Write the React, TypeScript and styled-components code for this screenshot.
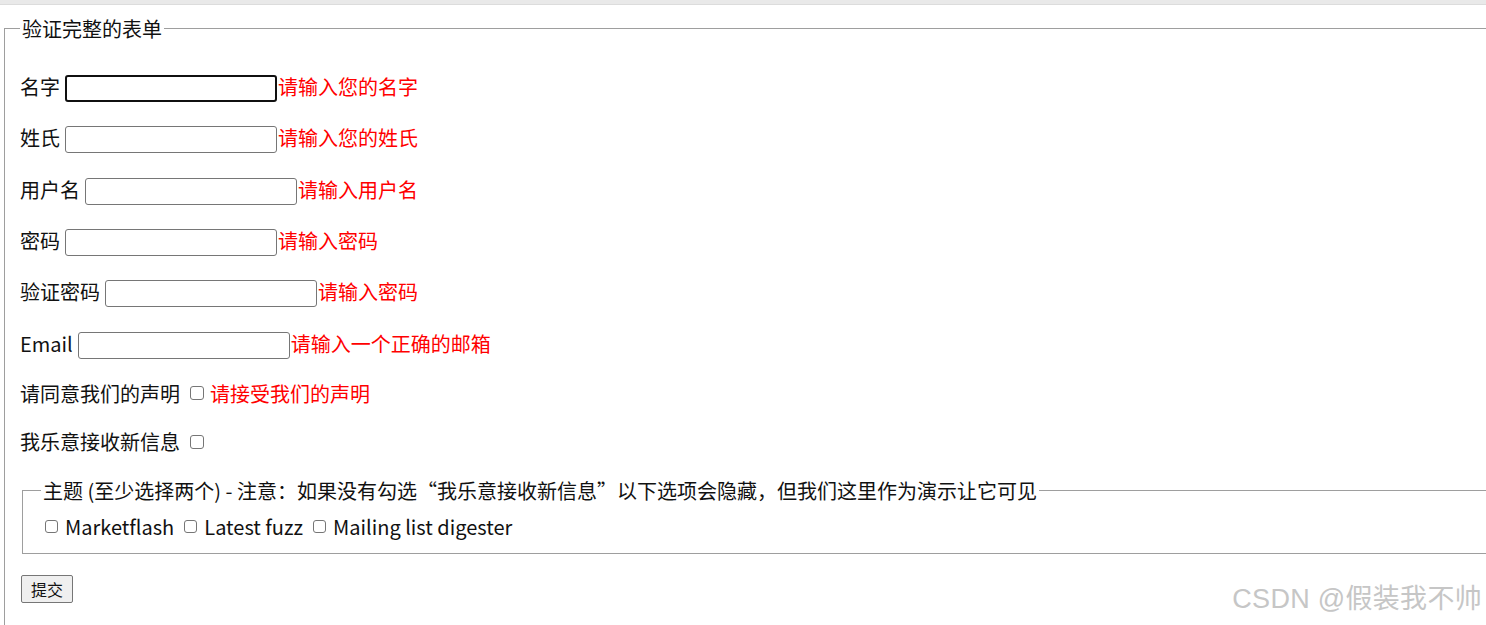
import React from "react";
import styled, { createGlobalStyle } from "styled-components";

const GlobalStyle = createGlobalStyle`
  html, body {
    margin: 0;
    padding: 0;
    overflow: hidden;
    background: #ffffff;
    width: 1486px;
    height: 625px;
  }
  body {
    font-family: "Noto Sans CJK SC", "Noto Sans", sans-serif;
    font-size: 20px;
    color: #111;
  }
`;

const Page = styled.div`
  position: relative;
  width: 1486px;
  height: 625px;
  overflow: hidden;
`;

const TopBar = styled.div`
  height: 4px;
  background: #e9e9e9;
  border-bottom: 1px solid #dcdcdc;
`;

const OuterFieldset = styled.fieldset`
  margin: 9px 0 0 4px;
  padding: 0 0 40px 15px;
  width: 1560px;
  min-height: 640px;
  border: 1px solid #9e9e9e;
  box-sizing: border-box;
`;

const Legend = styled.legend`
  padding: 0 2px;
  margin: 0;
  font-size: 20px;
  line-height: 29px;
  color: #111;
`;

const Content = styled.div`
  display: flex;
  flex-direction: column;
  align-items: flex-start;
  gap: 20px;
  padding-top: 28px;
`;

const Row = styled.div<{ $tall?: boolean }>`
  display: flex;
  align-items: center;
  height: ${(p) => (p.$tall ? "31.3px" : "28.5px")};
  line-height: 29px;
  white-space: nowrap;
`;

const Label = styled.span`
  color: #111;
`;

const TextInput = styled.input<{ $focused?: boolean }>`
  box-sizing: border-box;
  width: 212px;
  height: 27px;
  margin: 4px 1px 0 5px;
  padding: 0 4px;
  background: #fff;
  border: ${(p) => (p.$focused ? "2px solid #101010" : "1px solid #767676")};
  border-radius: 3px;
  outline: none;
  font-size: 15px;
`;

const Error = styled.span`
  color: #ff0000;
`;

const Check = styled.input.attrs({ type: "checkbox" })<{ $gapLeft: number; $gapRight: number; $size: number }>`
  appearance: none;
  -webkit-appearance: none;
  box-sizing: border-box;
  width: ${(p) => p.$size}px;
  height: ${(p) => p.$size}px;
  margin: 0 ${(p) => p.$gapRight}px 0 ${(p) => p.$gapLeft}px;
  border: 1px solid #767676;
  border-radius: 3px;
  background: #fff;
  flex: none;
`;

const InnerFieldset = styled.fieldset`
  align-self: stretch;
  margin: 0 0 0 2px;
  padding: 7px 0 12px 18px;
  border: 1px solid #9e9e9e;
  border-right: none;
`;

const OptionRow = styled.div`
  display: flex;
  align-items: center;
  height: 29px;
  line-height: 29px;
  white-space: nowrap;
`;

const OptionLabel = styled.span`
  margin-right: 10px;
  color: #111;
`;

const SubmitButton = styled.button`
  box-sizing: border-box;
  height: 28px;
  width: 52px;
  margin: 1px 0 0 1px;
  padding: 0;
  background: #efefef;
  border: 1px solid #767676;
  border-radius: 2px;
  font-family: "Noto Sans CJK SC", sans-serif;
  font-size: 16px;
  color: #111;
  line-height: 26px;
`;

const Watermark = styled.div`
  position: absolute;
  right: 4px;
  bottom: 9px;
  font-family: "Liberation Sans", "Noto Sans CJK SC", sans-serif;
  font-size: 27px;
  letter-spacing: 0.3px;
  color: #c6c6c6;
  white-space: nowrap;
`;

const inputRows = [
  { label: "名字", error: "请输入您的名字", focused: true },
  { label: "姓氏", error: "请输入您的姓氏" },
  { label: "用户名", error: "请输入用户名" },
  { label: "密码", error: "请输入密码" },
  { label: "验证密码", error: "请输入密码" },
  { label: "Email", error: "请输入一个正确的邮箱" },
];

const options = ["Marketflash", "Latest fuzz", "Mailing list digester"];

export default function App() {
  return (
    <Page>
      <GlobalStyle />
      <TopBar />
      <OuterFieldset>
        <Legend>验证完整的表单</Legend>
        <Content>
          {inputRows.map((r) => (
            <Row $tall key={r.label}>
              <Label>{r.label}</Label>
              <TextInput $focused={r.focused} />
              <Error>{r.error}</Error>
            </Row>
          ))}
          <Row>
            <Label>请同意我们的声明</Label>
            <Check $size={14} $gapLeft={10} $gapRight={6} />
            <Error>请接受我们的声明</Error>
          </Row>
          <Row>
            <Label>我乐意接收新信息</Label>
            <Check $size={14} $gapLeft={10} $gapRight={0} />
          </Row>
          <InnerFieldset>
            <Legend>主题 (至少选择两个) - 注意：如果没有勾选“我乐意接收新信息”以下选项会隐藏，但我们这里作为演示让它可见</Legend>
            <OptionRow>
              {options.map((o, i) => (
                <React.Fragment key={o}>
                  <Check $size={13} $gapLeft={i === 0 ? 4 : 0} $gapRight={7} />
                  <OptionLabel>{o}</OptionLabel>
                </React.Fragment>
              ))}
            </OptionRow>
          </InnerFieldset>
          <SubmitButton>提交</SubmitButton>
        </Content>
      </OuterFieldset>
      <Watermark>CSDN @假装我不帅</Watermark>
    </Page>
  );
}
